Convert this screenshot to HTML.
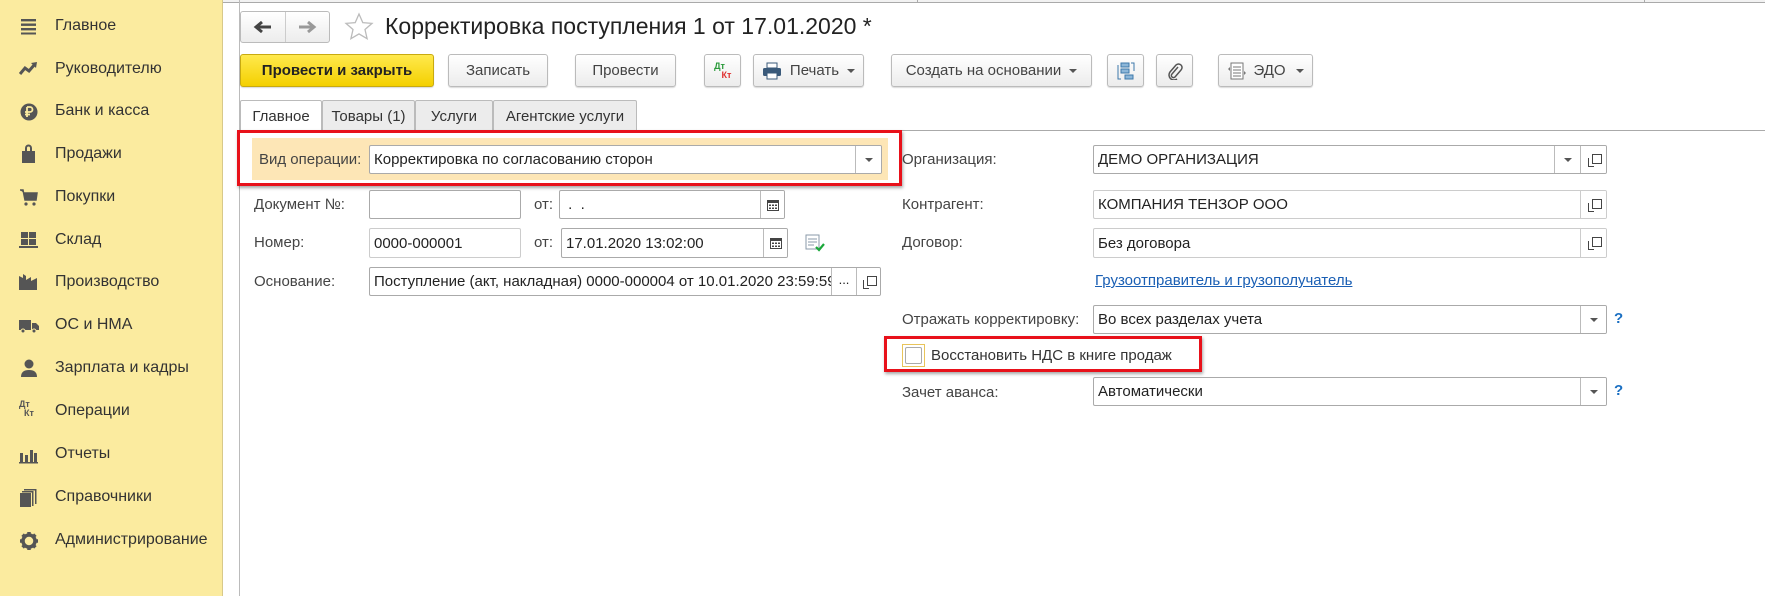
<!DOCTYPE html>
<html><head><meta charset="utf-8"><style>
*{box-sizing:border-box;margin:0;padding:0}
body{width:1765px;height:596px;overflow:hidden;background:#fff;font-family:"Liberation Sans",Arial,sans-serif;color:#333;position:relative}
.a{position:absolute}
#side{left:0;top:0;width:223px;height:596px;background:#fbeb9f;border-right:1px solid #d8c98a}
.it{position:absolute;left:55px;font-size:16px;color:#333;line-height:20px}
.ic{position:absolute;left:19px;width:20px;height:20px}
.btn{position:absolute;top:54px;height:33px;border:1px solid #bbb;border-radius:3px;background:linear-gradient(#fff,#ececec);font-size:15px;color:#444;display:flex;align-items:center;justify-content:center;box-shadow:0 1px 1px rgba(0,0,0,.15)}
.tab{position:absolute;top:100px;height:31px;border:1px solid #bbb;border-bottom:none;background:#ececec;font-size:15px;color:#333;display:flex;align-items:center;justify-content:center;border-radius:2px 2px 0 0}
.lbl{position:absolute;font-size:15px;color:#444;line-height:18px}
.fld{position:absolute;border:1px solid #aaa;border-radius:2px;background:#fff;font-size:15px;color:#222;padding-left:4px;display:flex;align-items:center;overflow:hidden;white-space:nowrap}
.fld.l{border-color:#ccc}
.sb{position:absolute;top:0;bottom:0;border-left:1px solid #bbb;display:flex;align-items:center;justify-content:center;background:#fff}
.dd{width:0;height:0;border-left:4px solid transparent;border-right:4px solid transparent;border-top:4px solid #555}
.cp{width:12px;height:12px;position:relative}
.cp:before{content:"";position:absolute;left:4px;top:0;width:8px;height:8px;border:1.3px solid #444}
.cp:after{content:"";position:absolute;left:0;top:4px;width:5px;height:8px;border-left:1.3px solid #444;border-bottom:1.3px solid #444}
.q{position:absolute;font-size:15px;color:#1a6fc2;font-weight:bold}
</style></head><body>
<div class="a" style="left:0;top:0;width:1765px;height:3px;background:#f2f2f2;border-bottom:1px solid #aaa"></div>
<div class="a" style="left:124px;top:0;width:1px;height:3px;background:#aaa"></div>
<div class="a" style="left:917px;top:0;width:1px;height:3px;background:#aaa"></div>
<div class="a" style="left:1644px;top:0;width:1px;height:3px;background:#aaa"></div>
<div id="side" class="a"></div>
<div class="a" style="left:239px;top:0;width:1px;height:596px;background:#bbb"></div>

<!-- sidebar -->
<svg class="ic" style="top:16px" viewBox="0 0 20 20"><g fill="#555"><rect x="2" y="3" width="15" height="2.4"/><rect x="2" y="7.5" width="15" height="2.4"/><rect x="2" y="12" width="15" height="2.4"/><rect x="2" y="16.5" width="15" height="2"/></g></svg>
<div class="it" style="top:16px">Главное</div>
<svg class="ic" style="top:59px" viewBox="0 0 20 20"><path d="M1 15 L6 9 L10 12 L16 5" stroke="#555" stroke-width="3" fill="none"/><path d="M12 4 L18 3 L17 9Z" fill="#555"/></svg>
<div class="it" style="top:59px">Руководителю</div>
<svg class="ic" style="top:102px" viewBox="0 0 20 20"><circle cx="10" cy="10" r="8.5" fill="#555"/><path d="M8 5v10M8 5h3a2.5 2.5 0 0 1 0 5H6M6 12.5h5" stroke="#fbeb9f" stroke-width="1.8" fill="none"/></svg>
<div class="it" style="top:101px">Банк и касса</div>
<svg class="ic" style="top:144px" viewBox="0 0 20 20"><rect x="3" y="7" width="13" height="12" fill="#555"/><path d="M7 8V4a2.5 2.5 0 0 1 5 0v4" stroke="#555" stroke-width="2" fill="none"/></svg>
<div class="it" style="top:144px">Продажи</div>
<svg class="ic" style="top:187px" viewBox="0 0 20 20"><path d="M1 3h3l2 10h11l1-7H5" fill="#555" stroke="#555" stroke-width="1.5"/><circle cx="7" cy="17" r="1.6" fill="#555"/><circle cx="15" cy="17" r="1.6" fill="#555"/></svg>
<div class="it" style="top:187px">Покупки</div>
<svg class="ic" style="top:230px" viewBox="0 0 20 20"><g fill="#555"><rect x="2" y="2" width="7" height="6"/><rect x="10" y="2" width="7" height="6"/><rect x="2" y="9" width="7" height="6"/><rect x="10" y="9" width="7" height="6"/><rect x="0" y="16" width="19" height="2"/></g></svg>
<div class="it" style="top:230px">Склад</div>
<svg class="ic" style="top:272px" viewBox="0 0 20 20"><path d="M0 18V4l4 2V2l3 2v4l5-3v4l6-3v12Z" fill="#555"/></svg>
<div class="it" style="top:272px">Производство</div>
<svg class="ic" style="top:315px" viewBox="0 0 20 20"><path d="M0 5h12v10H0ZM13 8h4l3 3v4h-7Z" fill="#555"/><circle cx="4" cy="16" r="2" fill="#555" stroke="#fbeb9f"/><circle cx="15" cy="16" r="2" fill="#555" stroke="#fbeb9f"/></svg>
<div class="it" style="top:315px">ОС и НМА</div>
<svg class="ic" style="top:358px" viewBox="0 0 20 20"><circle cx="10" cy="6" r="4.5" fill="#555"/><path d="M2 19c0-5 3-7 8-7s8 2 8 7Z" fill="#555"/></svg>
<div class="it" style="top:358px">Зарплата и кадры</div>
<div class="a" style="left:19px;top:400px;font-size:9px;font-weight:bold;color:#555;line-height:9px">Дт<br>&nbsp;&nbsp;Кт</div>
<div class="it" style="top:401px">Операции</div>
<svg class="ic" style="top:445px" viewBox="0 0 20 20"><g fill="#555"><rect x="1" y="8" width="3" height="9"/><rect x="6" y="10" width="3" height="7"/><rect x="11" y="5" width="3" height="12"/><rect x="15" y="8" width="3" height="9"/><rect x="0" y="17" width="19" height="1.5"/></g></svg>
<div class="it" style="top:444px">Отчеты</div>
<svg class="ic" style="top:488px" viewBox="0 0 20 20"><g fill="#555"><rect x="1" y="5" width="11" height="14"/><rect x="13" y="3" width="1.5" height="15"/><rect x="16" y="1" width="1.5" height="15"/><rect x="3" y="3" width="11" height="1.5"/><rect x="5" y="1" width="12" height="1.5"/></g></svg>
<div class="it" style="top:487px">Справочники</div>
<svg class="ic" style="top:531px" viewBox="0 0 20 20"><circle cx="10" cy="10" r="6" fill="none" stroke="#555" stroke-width="3.5"/><g stroke="#555" stroke-width="3.5"><path d="M10 1v4M10 15v4M1 10h4M15 10h4M3.6 3.6l2.8 2.8M13.6 13.6l2.8 2.8M3.6 16.4l2.8-2.8M13.6 6.4l2.8-2.8"/></g></svg>
<div class="it" style="top:530px">Администрирование</div>

<!-- header -->
<div class="a" style="left:240px;top:11px;width:90px;height:32px;border:1px solid #bbb;border-radius:3px;background:linear-gradient(#fff,#ececec)"></div>
<div class="a" style="left:285px;top:12px;width:1px;height:30px;background:#ccc"></div>
<svg class="a" style="left:253px;top:19px" width="20" height="16" viewBox="0 0 20 16"><path d="M18 8H5M9 3L3 8l6 5" stroke="#444" stroke-width="3" fill="none"/></svg>
<svg class="a" style="left:297px;top:19px" width="20" height="16" viewBox="0 0 20 16"><path d="M2 8h13M11 3l6 5-6 5" stroke="#999" stroke-width="3" fill="none"/></svg>
<svg class="a" style="left:344px;top:12px" width="30" height="30" viewBox="0 0 30 30"><path d="M15 2l3.8 8.6 9.2.8-7 6.1 2.1 9.2L15 21.9l-8.1 4.8 2.1-9.2-7-6.1 9.2-.8Z" fill="#fff" stroke="#bbb" stroke-width="1.3"/></svg>
<div class="a" style="left:385px;top:11px;font-size:23px;color:#222;line-height:30px">Корректировка поступления 1 от 17.01.2020 *</div>

<div class="btn" style="left:240px;width:194px;background:linear-gradient(#ffe94d,#f4d000);border-color:#c8aa10;font-weight:bold;color:#222">Провести и закрыть</div>
<div class="btn" style="left:448px;width:100px">Записать</div>
<div class="btn" style="left:575px;width:101px">Провести</div>
<div class="btn" style="left:704px;width:37px;flex-direction:column;font-size:9px;font-weight:bold;line-height:9px"><span style="color:#2a9a3a;margin-right:6px">Дт</span><span style="color:#e03030;margin-left:8px">Кт</span></div>
<div class="btn" style="left:753px;width:111px"><svg width="20" height="18" viewBox="0 0 20 18" style="margin-right:8px"><rect x="5" y="1" width="10" height="5" fill="#fff" stroke="#3a5a7a"/><rect x="1" y="6" width="18" height="8" rx="1.5" fill="#3a5a7a"/><rect x="5" y="11" width="10" height="6" fill="#fff" stroke="#3a5a7a"/></svg>Печать<span class="dd" style="margin-left:8px"></span></div>
<div class="btn" style="left:891px;width:201px">Создать на основании<span class="dd" style="margin-left:8px"></span></div>
<div class="btn" style="left:1107px;width:37px"><svg width="20" height="20" viewBox="0 0 20 20"><g fill="#8cb6d8" stroke="#3d78aa"><rect x="5" y="2" width="8" height="4"/><rect x="5" y="8" width="8" height="4"/><rect x="9" y="14" width="8" height="4"/></g><path d="M2 4v14h3M15 2h3v8" stroke="#3d78aa" fill="none"/></svg></div>
<div class="btn" style="left:1156px;width:37px"><svg width="16" height="18" viewBox="0 0 16 18"><path d="M11 5l-6 7a2 2 0 0 0 3 3l6-7a3.5 3.5 0 0 0-5-5L3 10a5 5 0 0 0 7 7" stroke="#555" stroke-width="1.5" fill="none"/></svg></div>
<div class="btn" style="left:1218px;width:95px"><svg width="20" height="18" viewBox="0 0 20 18" style="margin-right:6px"><rect x="4" y="1" width="12" height="16" fill="#fff" stroke="#777"/><path d="M6 5h8M6 8h8M6 11h8M6 14h8" stroke="#777"/><path d="M1 7l2-2v4Z M19 11l-2-2v4Z" fill="#777"/></svg>ЭДО<span class="dd" style="margin-left:10px"></span></div>

<!-- tabs -->
<div class="a" style="left:240px;top:130px;width:1525px;height:1px;background:#aaa"></div>
<div class="tab" style="left:240px;width:82px;background:#fff;height:32px">Главное</div>
<div class="tab" style="left:322px;width:93px">Товары (1)</div>
<div class="tab" style="left:415px;width:78px">Услуги</div>
<div class="tab" style="left:493px;width:144px">Агентские услуги</div>

<!-- red box 1 -->
<div class="a" style="left:252px;top:138px;width:636px;height:42px;background:#fde6b6"></div>
<div class="a" style="left:237px;top:130px;width:665px;height:56px;border:3px solid #e8111a;box-shadow:1px 2px 3px rgba(0,0,0,.35)"></div>
<div class="lbl" style="left:259px;top:151px">Вид операции:</div>
<div class="fld" style="left:369px;top:145px;width:513px;height:29px">Корректировка по согласованию сторон<div class="sb" style="right:0;width:26px"><span class="dd"></span></div></div>

<div class="lbl" style="left:254px;top:196px">Документ №:</div>
<div class="fld" style="left:369px;top:190px;width:152px;height:29px"></div>
<div class="lbl" style="left:534px;top:196px">от:</div>
<div class="fld" style="left:559px;top:190px;width:226px;height:29px">&nbsp;.&nbsp;&nbsp;.<div class="sb" style="right:0;width:24px"><svg width="12" height="12" viewBox="0 0 12 12"><rect x="0.5" y="1.5" width="11" height="10" fill="none" stroke="#444"/><rect x="0.5" y="1.5" width="11" height="2.5" fill="#444"/><g fill="#444"><rect x="2" y="5.5" width="2" height="1.5"/><rect x="5" y="5.5" width="2" height="1.5"/><rect x="8" y="5.5" width="2" height="1.5"/><rect x="2" y="8.5" width="2" height="1.5"/><rect x="5" y="8.5" width="2" height="1.5"/><rect x="8" y="8.5" width="2" height="1.5"/></g></svg></div></div>

<div class="lbl" style="left:254px;top:234px">Номер:</div>
<div class="fld l" style="left:369px;top:228px;width:152px;height:30px">0000-000001</div>
<div class="lbl" style="left:534px;top:234px">от:</div>
<div class="fld" style="left:561px;top:228px;width:227px;height:30px">17.01.2020 13:02:00<div class="sb" style="right:0;width:24px"><svg width="12" height="12" viewBox="0 0 12 12"><rect x="0.5" y="1.5" width="11" height="10" fill="none" stroke="#444"/><rect x="0.5" y="1.5" width="11" height="2.5" fill="#444"/><g fill="#444"><rect x="2" y="5.5" width="2" height="1.5"/><rect x="5" y="5.5" width="2" height="1.5"/><rect x="8" y="5.5" width="2" height="1.5"/><rect x="2" y="8.5" width="2" height="1.5"/><rect x="5" y="8.5" width="2" height="1.5"/><rect x="8" y="8.5" width="2" height="1.5"/></g></svg></div></div>
<svg class="a" style="left:805px;top:234px" width="20" height="18" viewBox="0 0 20 18"><rect x="1" y="1" width="13" height="14" fill="#fff" stroke="#8a9aa8"/><path d="M3 5h9M3 8h9M3 11h6" stroke="#8a9aa8"/><path d="M11 13l3 3 5-6" stroke="#1aa83a" stroke-width="2.2" fill="none"/></svg>

<div class="lbl" style="left:254px;top:273px">Основание:</div>
<div class="fld" style="left:369px;top:267px;width:512px;height:29px">Поступление (акт, накладная) 0000-000004 от 10.01.2020 23:59:59<div class="sb" style="right:24px;width:25px;font-size:13px;align-items:flex-end;padding-bottom:8px">...</div><div class="sb" style="right:0;width:24px"><span class="cp"></span></div></div>

<!-- right column -->
<div class="lbl" style="left:902px;top:151px">Организация:</div>
<div class="fld" style="left:1093px;top:145px;width:514px;height:29px">ДЕМО ОРГАНИЗАЦИЯ<div class="sb" style="right:26px;width:26px"><span class="dd"></span></div><div class="sb" style="right:0;width:26px"><span class="cp"></span></div></div>
<div class="lbl" style="left:902px;top:196px">Контрагент:</div>
<div class="fld l" style="left:1093px;top:190px;width:514px;height:29px">КОМПАНИЯ ТЕНЗОР ООО<div class="sb" style="right:0;width:26px;border-color:#ccc"><span class="cp"></span></div></div>
<div class="lbl" style="left:902px;top:234px">Договор:</div>
<div class="fld l" style="left:1093px;top:228px;width:514px;height:30px">Без договора<div class="sb" style="right:0;width:26px;border-color:#ccc"><span class="cp"></span></div></div>
<div class="a" style="left:1095px;top:272px;font-size:15px;color:#1a5fb4;text-decoration:underline">Грузоотправитель и грузополучатель</div>
<div class="lbl" style="left:902px;top:311px">Отражать корректировку:</div>
<div class="fld" style="left:1093px;top:305px;width:514px;height:29px">Во всех разделах учета<div class="sb" style="right:0;width:26px"><span class="dd"></span></div></div>
<div class="q" style="left:1614px;top:310px">?</div>

<div class="a" style="left:884px;top:336px;width:318px;height:36px;border:3px solid #e8111a;box-shadow:1px 2px 3px rgba(0,0,0,.35)"></div>
<div class="a" style="left:902px;top:344px;width:23px;height:23px;border:1px solid #e8c45a;background:#fff"><div style="margin:2px;width:17px;height:17px;border:1px solid #aaa;border-radius:2px"></div></div>
<div class="lbl" style="left:931px;top:347px;color:#333">Восстановить НДС в книге продаж</div>

<div class="lbl" style="left:902px;top:384px">Зачет аванса:</div>
<div class="fld" style="left:1093px;top:377px;width:514px;height:29px">Автоматически<div class="sb" style="right:0;width:26px"><span class="dd"></span></div></div>
<div class="q" style="left:1614px;top:382px">?</div>
</body></html>
